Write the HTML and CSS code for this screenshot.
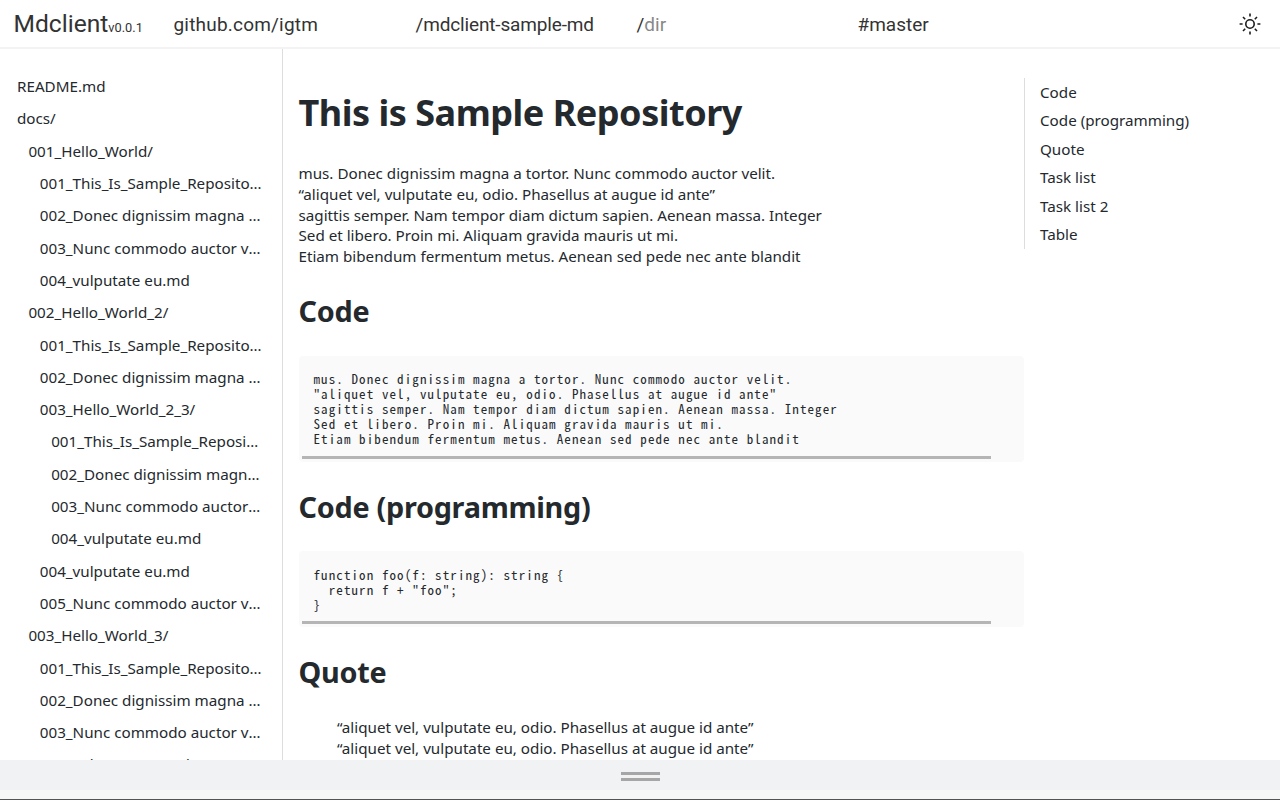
FILE: index.html
```html
<!DOCTYPE html>
<html lang="en">
<head>
  <meta charset="UTF-8">
  <title>Mdclient</title>
  <link rel="stylesheet" href="styles.css">
</head>
<body>
  <header class="topbar">
    <div class="brand">Mdclient<small>v0.0.1</small></div>
    <div class="crumb crumb-owner">github.com/igtm</div>
    <div class="crumb crumb-repo">/mdclient-sample-md</div>
    <div class="crumb crumb-dir">/<span class="placeholder">dir</span></div>
    <div class="crumb crumb-branch">#master</div>
    <button class="theme-toggle" aria-label="Toggle theme">
      <svg width="24" height="24" viewBox="0 0 24 24" fill="none" stroke="#1c1c1c" stroke-width="1.6">
        <circle cx="12" cy="12" r="4.2"/>
        <path d="M12 1.6v3M12 19.4v3M1.6 12h3M19.4 12h3M5 5l2.2 2.2M16.8 16.8L19 19M5 19l2.2-2.2M16.8 7.2L19 5"/>
      </svg>
    </button>
  </header>

  <div class="workspace">
    <nav class="tree">
      <a class="tree-row">README.md</a>
      <a class="tree-row">docs/</a>
      <a class="tree-row depth-1">001_Hello_World/</a>
      <a class="tree-row depth-2">001_This_Is_Sample_Repository.md</a>
      <a class="tree-row depth-2">002_Donec dignissim magna a tortor.md</a>
      <a class="tree-row depth-2">003_Nunc commodo auctor velit.md</a>
      <a class="tree-row depth-2">004_vulputate eu.md</a>
      <a class="tree-row depth-1">002_Hello_World_2/</a>
      <a class="tree-row depth-2">001_This_Is_Sample_Repository.md</a>
      <a class="tree-row depth-2">002_Donec dignissim magna a tortor.md</a>
      <a class="tree-row depth-2">003_Hello_World_2_3/</a>
      <a class="tree-row depth-3">001_This_Is_Sample_Repository.md</a>
      <a class="tree-row depth-3">002_Donec dignissim magna a tortor.md</a>
      <a class="tree-row depth-3">003_Nunc commodo auctor velit.md</a>
      <a class="tree-row depth-3">004_vulputate eu.md</a>
      <a class="tree-row depth-2">004_vulputate eu.md</a>
      <a class="tree-row depth-2">005_Nunc commodo auctor velit.md</a>
      <a class="tree-row depth-1">003_Hello_World_3/</a>
      <a class="tree-row depth-2">001_This_Is_Sample_Repository.md</a>
      <a class="tree-row depth-2">002_Donec dignissim magna a tortor.md</a>
      <a class="tree-row depth-2">003_Nunc commodo auctor velit.md</a>
      <a class="tree-row depth-2">004_vulputate eu.md</a>
    </nav>

    <main class="doc">
      <h1>This is Sample Repository</h1>
      <p>mus. Donec dignissim magna a tortor. Nunc commodo auctor velit.<br>
      “aliquet vel, vulputate eu, odio. Phasellus at augue id ante”<br>
      sagittis semper. Nam tempor diam dictum sapien. Aenean massa. Integer<br>
      Sed et libero. Proin mi. Aliquam gravida mauris ut mi.<br>
      Etiam bibendum fermentum metus. Aenean sed pede nec ante blandit</p>

      <h2>Code</h2>
      <div class="code-block">
<pre>mus. Donec dignissim magna a tortor. Nunc commodo auctor velit.
"aliquet vel, vulputate eu, odio. Phasellus at augue id ante"
sagittis semper. Nam tempor diam dictum sapien. Aenean massa. Integer
Sed et libero. Proin mi. Aliquam gravida mauris ut mi.
Etiam bibendum fermentum metus. Aenean sed pede nec ante blandit</pre>
        <div class="code-scroll"></div>
      </div>

      <h2>Code (programming)</h2>
      <div class="code-block">
<pre>function foo(f: string): string {
  return f + "foo";
}</pre>
        <div class="code-scroll"></div>
      </div>

      <h2>Quote</h2>
      <blockquote>“aliquet vel, vulputate eu, odio. Phasellus at augue id ante”<br>
      “aliquet vel, vulputate eu, odio. Phasellus at augue id ante”</blockquote>
    </main>

    <aside class="toc">
      <ul>
        <li>Code</li>
        <li>Code (programming)</li>
        <li>Quote</li>
        <li>Task list</li>
        <li>Task list 2</li>
        <li>Table</li>
      </ul>
    </aside>
  </div>

  <footer class="drawer">
    <div class="drawer-handle"><span></span></div>
    <div class="drawer-rest"></div>
  </footer>
</body>
</html>
```

FILE: styles.css
```css
/* Global styling */
* {
  margin: 0;
  padding: 0;
  box-sizing: border-box;
}

body {
  display: flex;
  flex-direction: column;
  height: 100vh;
  overflow: hidden;
  background: #fff;
  color: #24292e;
  font-family: 'Noto Sans', sans-serif;
  font-size: 15.2px;
}

/* Top bar */
.topbar {
  display: flex;
  align-items: center;
  height: 49px;
  flex-shrink: 0;
  border-bottom: 2px solid #f3f3f3;
  padding-left: 13.5px;
  font-family: Roboto, sans-serif;
  color: #333;
}

.brand {
  width: 160px;
  font-size: 24.6px;
}

.brand small {
  font-size: 12.8px;
}

.crumb {
  padding-top: 1px;
  font-size: 19px;
}

.crumb-owner {
  width: 242px;
  letter-spacing: 0.2px;
}

.crumb-repo {
  width: 221px;
  letter-spacing: -0.15px;
}

.crumb-dir {
  width: 221px;
}

.placeholder {
  color: #888;
}

.theme-toggle {
  display: flex;
  margin-left: auto;
  margin-right: 18px;
  border: none;
  background: none;
}

/* Main area */
.workspace {
  display: flex;
  flex: 1;
  min-height: 0;
  overflow: hidden;
}

.tree {
  width: 283px;
  flex-shrink: 0;
  padding: 21.2px 20px 0 17px;
  border-right: 1px solid #ddd;
}

.tree-row {
  display: block;
  height: 32.3px;
  line-height: 32px;
  white-space: nowrap;
  overflow: hidden;
  text-overflow: ellipsis;
}

.depth-1 { margin-left: 11.4px; }
.depth-2 { margin-left: 22.8px; }
.depth-3 { margin-left: 34.2px; }

.doc {
  width: 741px;
  flex-shrink: 0;
  padding: 39px 0 0 15.5px;
}

h1 {
  font-size: 36px;
  font-weight: 680;
  line-height: 50px;
  margin-bottom: 25px;
  letter-spacing: -0.48px;
}

.doc p {
  line-height: 20.8px;
}

h2 {
  font-size: 28.8px;
  font-weight: 680;
  line-height: 39px;
  margin: 24.5px 0 25.5px;
  letter-spacing: -0.27px;
}

.code-block {
  background: #fafafa;
  border-radius: 4px;
  padding: 15.5px 0 3px;
  margin-bottom: 25px;
}

.code-block pre {
  padding: 0 15px 9.5px;
  font-family: 'Noto Sans Mono CJK JP', 'Liberation Mono', monospace;
  font-size: 13px;
  letter-spacing: 1.1px;
  line-height: 15px;
}

.code-scroll {
  width: 689px;
  height: 3px;
  margin-left: 3.5px;
  background: #b5b5b5;
}

blockquote {
  padding-left: 38.5px;
  line-height: 21px;
}

/* Table of contents */
.toc {
  flex: 1;
  padding-top: 28.7px;
}

.toc ul {
  list-style: none;
  border-left: 1px solid #ddd;
  padding-left: 15px;
}

.toc li {
  height: 28.5px;
  line-height: 28px;
}

/* Bottom drawer */
.drawer {
  flex-shrink: 0;
  height: 40px;
  border-bottom: 1px solid #555;
  background: #f6f8f7;
}

.drawer-handle {
  display: flex;
  align-items: center;
  justify-content: center;
  height: 30px;
  padding-top: 3px;
  background: #f0f2f4;
}

.drawer-handle span {
  width: 39px;
  height: 9px;
  border-top: 3px solid #a6a6a6;
  border-bottom: 3px solid #a6a6a6;
}
```
